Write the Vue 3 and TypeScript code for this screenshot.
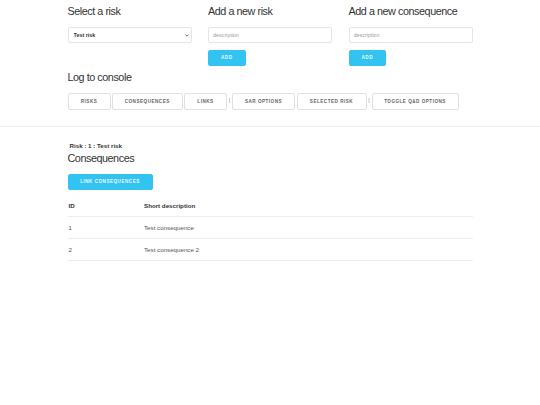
<script setup lang="ts">
const rows = [
  { id: 1, text: 'Test consequence' },
  { id: 2, text: 'Test consequence 2' },
]
</script>

<template>
  <div class="page">
    <div class="container">
      <div class="cols">
        <div class="col">
          <h4>Select a risk</h4>
          <div class="select-wrap">
            <select class="field select">
              <option>Test risk</option>
            </select>
            <svg class="chevron" viewBox="0 0 6 4" width="4" height="3" aria-hidden="true">
              <path d="M0.7 0.8 L3 3.1 L5.3 0.8" fill="none" stroke="#333" stroke-width="1.1" />
            </svg>
          </div>
        </div>
        <div class="col">
          <h4>Add a new risk</h4>
          <input class="field" placeholder="description" />
          <button class="btn primary add">ADD</button>
        </div>
        <div class="col">
          <h4>Add a new consequence</h4>
          <input class="field" placeholder="description" />
          <button class="btn primary add">ADD</button>
        </div>
      </div>
      <h4 class="log">Log to console</h4>
      <div class="actions">
        <button class="btn w43">RISKS</button>
        <button class="btn w71">CONSEQUENCES</button>
        <button class="btn w43">LINKS</button>
        <span class="sep">|</span>
        <button class="btn w63">SAR OPTIONS</button>
        <button class="btn w70">SELECTED RISK</button>
        <span class="sep">|</span>
        <button class="btn w87">TOGGLE Q&amp;D OPTIONS</button>
      </div>
    </div>
    <hr />
    <div class="container">
      <div class="risk">Risk : 1 : Test risk</div>
      <h4 class="cons">Consequences</h4>
      <button class="btn primary link">LINK CONSEQUENCES</button>
      <table>
        <thead>
          <tr><th class="id">ID</th><th>Short description</th></tr>
        </thead>
        <tbody>
          <tr v-for="r in rows" :key="r.id">
            <td class="id">{{ r.id }}</td>
            <td>{{ r.text }}</td>
          </tr>
        </tbody>
      </table>
    </div>
  </div>
</template>

<style>
html, body { margin: 0; background: #fff; }
</style>

<style scoped>
.page {
  width: 540px;
  height: 405px;
  overflow: hidden;
  font-family: "Liberation Sans", Arial, sans-serif;
  color: #333;
}
.container { width: 405px; margin-left: 67.5px; }
.cols {
  display: grid;
  grid-template-columns: repeat(3, 124px);
  column-gap: 16.5px;
  padding-top: 4.5px;
}
.col { display: flex; flex-direction: column; align-items: flex-start; }
h4 {
  margin: 0;
  font-size: 10.8px;
  line-height: 13px;
  font-weight: 400;
  letter-spacing: -0.45px;
  color: #333;
}
.select-wrap { position: relative; width: 100%; }
.chevron { position: absolute; right: 3px; top: 16px; }
.field {
  box-sizing: border-box;
  display: block;
  width: 100%;
  height: 16px;
  margin-top: 9.5px;
  padding: 0 4px;
  border: 1px solid #e6e6e6;
  border-radius: 2px;
  background: #fff;
  font-family: inherit;
  font-size: 5.4px;
  color: #333;
  outline: none;
}
.select {
  appearance: none;
  font-weight: 700;
  padding: 0 5px;
  font-size: 5.4px;
}
.field::placeholder { color: #a0a0a0; opacity: 1; }
.btn {
  box-sizing: border-box;
  height: 16.5px;
  padding: 0;
  border: 1px solid #e0e0e0;
  border-radius: 2px;
  background: transparent;
  font-family: inherit;
  font-size: 4.6px;
  font-weight: 700;
  letter-spacing: 0.5px;
  color: #666;
  text-align: center;
}
.primary { background: #33c3f0; border-color: #33c3f0; color: #e8f8fe; }
.add { width: 37.5px; margin-top: 6.5px; }
.log { margin-top: 5px; }
.actions {
  display: flex;
  align-items: center;
  gap: 1.5px;
  margin-top: 9px;
}
.sep { font-size: 5.4px; color: #888; width: 2px; text-align: center; margin-top: -3px; }
.w43 { width: 43px; }
.w71 { width: 70.5px; }
.w63 { width: 63px; }
.w70 { width: 70px; }
.w87 { width: 87px; }
hr {
  height: 1px;
  margin: 16px 0 0;
  border: 0;
  background: #eeeeee;
}
.risk {
  margin: 15.5px 0 0 2px;
  font-size: 6.2px;
  line-height: 8px;
  font-weight: 700;
  color: #333;
}
.cons { margin-top: 1.5px; }
.link { display: block; width: 85px; margin-top: 9px; }
table {
  width: 405px;
  margin-top: 5px;
  border-collapse: collapse;
  font-size: 6.2px;
  color: #555;
}
th, td {
  height: 21px;
  padding: 0;
  text-align: left;
  border-bottom: 1px solid #eeeeee;
}
th { font-weight: 700; color: #333; }
.id { width: 75.5px; padding-left: 1px; }
</style>
